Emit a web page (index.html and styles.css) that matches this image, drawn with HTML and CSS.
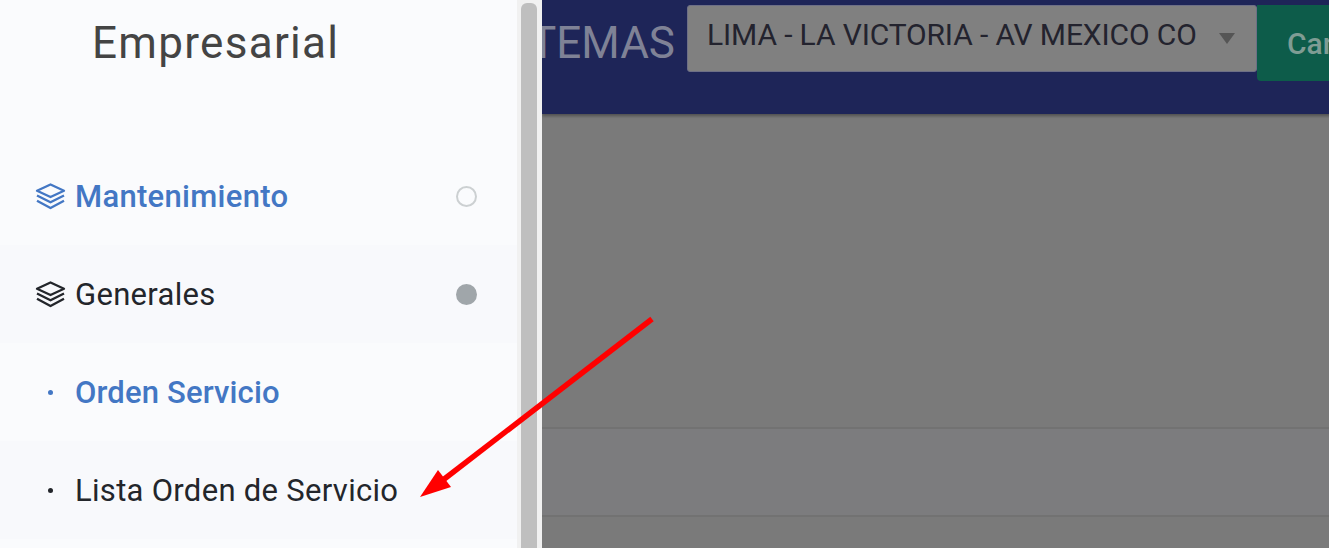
FILE: index.html
```html
<!DOCTYPE html>
<html lang="es">
<head>
  <meta charset="UTF-8">
  <title>Empresarial</title>
  <link rel="stylesheet" href="styles.css">
</head>
<body>
  <div class="layout">
    <aside class="sidebar">
      <div class="sidebar-inner">
        <div class="brand">Empresarial</div>
        <nav class="menu">
          <a class="menu-item active">
            <svg class="layers" viewBox="0 0 32 28" fill="none" stroke="currentColor" stroke-width="2.4" stroke-linejoin="round"><path d="M16 1.5 30 8 16 14.5 2 8Z"/><path d="M2 13 16 20 30 13"/><path d="M2 18.5 16 26 30 18.5"/></svg>
            <span class="menu-label strong">Mantenimiento</span>
            <span class="dot"></span>
          </a>
          <a class="menu-item">
            <svg class="layers" viewBox="0 0 32 28" fill="none" stroke="currentColor" stroke-width="2.4" stroke-linejoin="round"><path d="M16 1.5 30 8 16 14.5 2 8Z"/><path d="M2 13 16 20 30 13"/><path d="M2 18.5 16 26 30 18.5"/></svg>
            <span class="menu-label">Generales</span>
            <span class="dot filled"></span>
          </a>
          <a class="menu-item active sub">
            <span class="bullet"></span>
            <span class="menu-label strong">Orden Servicio</span>
          </a>
          <a class="menu-item sub">
            <span class="bullet"></span>
            <span class="menu-label">Lista Orden de Servicio</span>
          </a>
        </nav>
      </div>
      <div class="scrollbar"><div class="scroll-thumb"></div></div>
    </aside>
    <main class="content">
      <header class="topbar">
        <div class="topbar-title">SISTEMAS</div>
        <div class="branch-select">
          <span class="branch-text">LIMA - LA VICTORIA - AV MEXICO CO</span>
          <span class="caret"></span>
        </div>
        <button class="change-btn">Cambiar</button>
      </header>
      <div class="panel">
        <div class="panel-row first"></div>
        <div class="panel-row second"></div>
      </div>
    </main>
  </div>

  <svg class="arrow" viewBox="0 0 1329 548" width="1329" height="548">
    <path d="M652 319 L443 480" stroke="#ff0000" stroke-width="5.5" fill="none"/>
    <path d="M420 497 L438 470 L451 487Z" fill="#ff0000"/>
  </svg>
</body>
</html>
```

FILE: styles.css
```css
* {
  box-sizing: border-box;
}
html, body {
  margin: 0;
  height: 100%;
  overflow: hidden;
}
body {
  font-family: Roboto, "Liberation Sans", sans-serif;
  background-color: #7a7a7a;
}
.layout {
  display: flex;
  height: 548px;
}
.sidebar {
  display: flex;
  width: 542px;
  flex-shrink: 0;
  background-color: #fafbfd;
}
.sidebar-inner {
  width: 517px;
  flex-shrink: 0;
}
.brand {
  height: 147px;
  padding: 18px 0 0 92px;
  font-size: 44px;
  line-height: 50px;
  letter-spacing: 1.3px;
  color: #444;
}
.menu-item {
  display: flex;
  align-items: center;
  height: 98px;
  padding: 0 40px 0 35px;
  font-size: 31px;
  letter-spacing: 0.3px;
  color: #23262b;
  background-color: #f8f9fc;
}
.menu-item.active {
  color: #4377c4;
  background-color: #fafbfd;
}
.layers {
  width: 31px;
  height: 27px;
  margin-right: 9px;
}
.menu-label {
  flex: 1;
  white-space: nowrap;
}
.menu-label.strong {
  font-weight: 500;
}
.sub .menu-label.strong {
  letter-spacing: 0.15px;
}
.dot {
  width: 21px;
  height: 21px;
  border-radius: 50%;
  border: 2px solid #ccd0d2;
}
.dot.filled {
  background-color: #a0a6aa;
  border-color: #a0a6aa;
}
.bullet {
  width: 5px;
  height: 5px;
  margin: 0 22px 0 13px;
  border-radius: 50%;
  background-color: currentColor;
}
.scrollbar {
  display: flex;
  justify-content: center;
  width: 25px;
  padding: 3px 5px 0 4px;
  background-color: #f1f1f1;
}
.scroll-thumb {
  width: 100%;
  background-color: #bfbfbf;
  border-radius: 6px 6px 0 0;
}
.content {
  flex: 1;
  min-width: 0;
  overflow: hidden;
}
.topbar {
  display: flex;
  align-items: flex-start;
  justify-content: flex-end;
  height: 114px;
  padding-top: 5px;
  margin-right: -110px;
  background-color: #1e2558;
  box-shadow: 0 2px 3px rgba(0, 0, 0, 0.35);
  position: relative;
}
.topbar-title {
  margin: 13px 12px 0 0;
  font-size: 44px;
  line-height: 50px;
  color: #7f8296;
  white-space: nowrap;
}
.branch-select {
  display: flex;
  align-items: flex-start;
  justify-content: space-between;
  width: 570px;
  height: 67px;
  padding: 13px 21px 0 19px;
  background-color: #808080;
  border: 1px solid #6d6f86;
  border-radius: 3px;
  flex-shrink: 0;
}
.branch-text {
  font-size: 30px;
  line-height: 32px;
  letter-spacing: -0.13px;
  color: #23232e;
  white-space: nowrap;
}
.caret {
  margin-top: 14px;
  border-left: 8px solid transparent;
  border-right: 8px solid transparent;
  border-top: 11px solid #555;
}
.change-btn {
  width: 182px;
  height: 76px;
  padding: 0 0 0 30px;
  text-align: left;
  flex-shrink: 0;
  border: none;
  border-radius: 0 4px 4px 4px;
  background-color: #0d5c4a;
  color: #7f9c94;
  font-family: inherit;
  font-size: 30px;
  font-weight: 500;
}
.panel {
  display: flex;
  flex-direction: column;
  padding-top: 313px;
}
.panel-row {
  height: 88px;
  border-top: 2px solid #727272;
}
.panel-row.first {
  background-color: #7c7c7e;
}
.arrow {
  position: absolute;
  top: 0;
  left: 0;
  pointer-events: none;
}
```
